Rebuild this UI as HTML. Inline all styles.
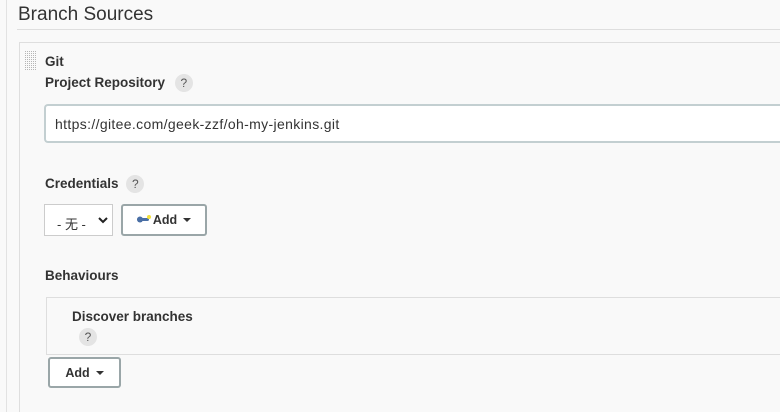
<!DOCTYPE html>
<html><head><meta charset="utf-8"><style>
*{box-sizing:border-box;margin:0;padding:0}
html,body{width:780px;height:412px;overflow:hidden}
body{background:#f9f9f9;font-family:"Liberation Sans","Noto Sans CJK SC",sans-serif;color:#333;position:relative}
.abs{position:absolute}
.lbl{font-weight:bold;font-size:13.5px;color:#333}
.q{display:inline-block;width:18px;height:18px;border-radius:50%;background:#e4e4e4;color:#555;font-size:12px;text-align:center;line-height:18px;font-weight:normal}
.btn{border:2px solid #9aa6a8;border-radius:3px;background:#fff;font-weight:bold;font-size:12.5px;color:#333;display:flex;align-items:center;justify-content:center}
.caret{display:inline-block;border-left:4px solid transparent;border-right:4px solid transparent;border-top:4px solid #333;margin-left:6px}
</style></head><body>
<div class="abs" style="left:6px;top:0;width:1px;height:412px;background:#e2e2e2"></div>
<div class="abs" style="left:18px;top:4px;font-size:19px;color:#333">Branch Sources</div>
<div class="abs" style="left:17px;top:29px;width:763px;height:1px;background:#dedede"></div>
<div class="abs" style="left:19px;top:42px;width:761px;height:370px;border-top:1px solid #dedede;border-left:1px solid #dedede"></div>
<svg class="abs" style="left:25px;top:51px" width="12" height="20">
<defs><pattern id="d" width="2" height="2" patternUnits="userSpaceOnUse"><rect width="1" height="1" fill="#b5b5b5"/></pattern></defs>
<rect width="12" height="20" fill="url(#d)"/></svg>
<div class="abs lbl" style="left:45px;top:54px">Git</div>
<div class="abs lbl" style="left:45px;top:74px">Project Repository <span class="q" style="margin-left:6px">?</span></div>
<div class="abs" style="left:44px;top:104px;width:736px;height:39px;background:#fff;border:2px solid #c3cfd1;border-right:none;border-radius:4px 0 0 4px"></div>
<div class="abs" style="left:55px;top:116px;font-size:14px;letter-spacing:0.35px;color:#333">https://gitee.com/geek-zzf/oh-my-jenkins.git</div>
<div class="abs lbl" style="left:45px;top:175px">Credentials <span class="q" style="margin-left:4px">?</span></div>
<div class="abs" style="left:44px;top:204px;width:69px;height:32px;background:#fff;border:1px solid #ccc;font-size:13px;padding:9px 0 0 12px">- 无 -<svg style="position:absolute;left:53px;top:12px" width="10" height="7"><path d="M1 1L5 5L9 1" stroke="#222" stroke-width="2" fill="none"/></svg></div>
<div class="abs btn" style="left:121px;top:204px;width:86px;height:32px"><svg width="16" height="10" viewBox="0 0 16 10"><rect x="0" y="3" width="12" height="3" rx="1.5" fill="#4a6fa5"/><circle cx="3" cy="4.5" r="3" fill="#4a6fa5"/><circle cx="12" cy="2" r="2" fill="#f3e03b"/></svg>Add<span class="caret"></span></div>
<div class="abs lbl" style="left:45px;top:268px">Behaviours</div>
<div class="abs" style="left:46px;top:297px;width:734px;height:58px;border:1px solid #dedede;border-right:none"></div>
<div class="abs lbl" style="left:72px;top:309px">Discover branches</div>
<div class="abs" style="left:79px;top:328px"><span class="q">?</span></div>
<div class="abs btn" style="left:48px;top:357px;width:73px;height:31px">Add<span class="caret"></span></div>
</body></html>
